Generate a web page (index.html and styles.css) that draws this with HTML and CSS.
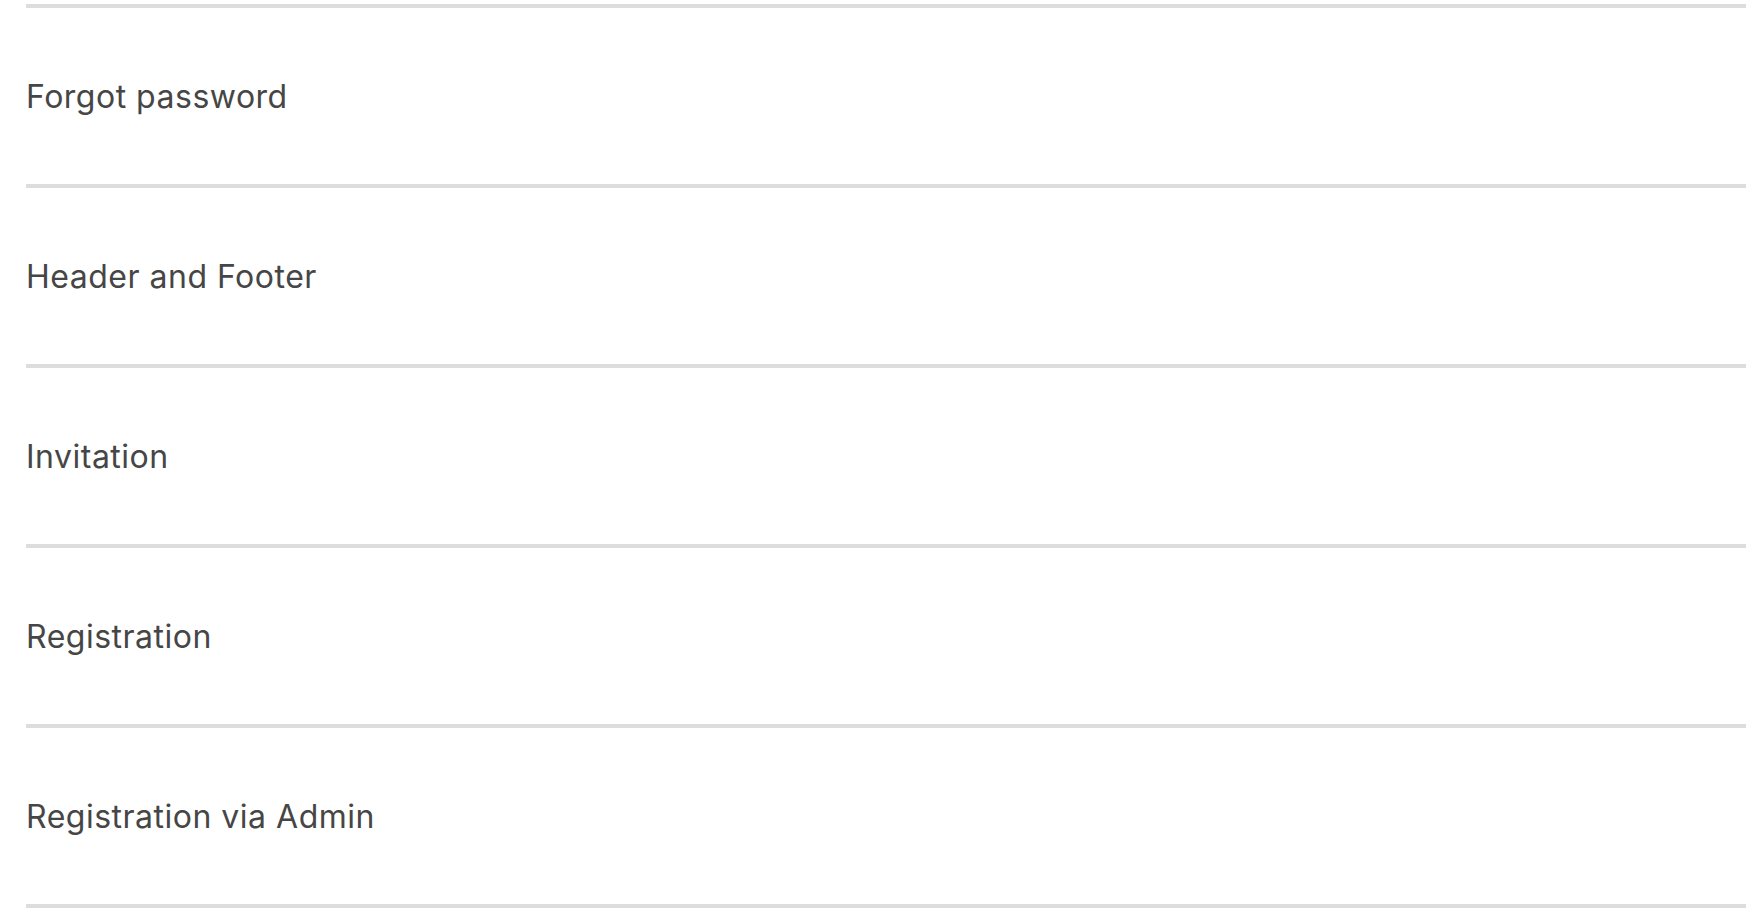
FILE: index.html
```html
<!DOCTYPE html>
<html lang="en">
<head>
<meta charset="utf-8">
<title>Templates</title>
<link rel="stylesheet" href="styles.css">
</head>
<body>
<ul class="template-list">
  <li class="template-row"><span class="template-name">Forgot password</span></li>
  <li class="template-row"><span class="template-name">Header and Footer</span></li>
  <li class="template-row"><span class="template-name">Invitation</span></li>
  <li class="template-row"><span class="template-name">Registration</span></li>
  <li class="template-row"><span class="template-name">Registration via Admin</span></li>
</ul>
</body>
</html>
```
FILE: styles.css
```css
html, body {
  margin: 0;
  padding: 0;
  background: #ffffff;
}
body {
  font-family: Inter, "Noto Sans", "Liberation Sans", sans-serif;
  color: #464646;
  padding: 4px 0 0 26px;
}
.template-list {
  list-style: none;
  margin: 0;
  padding: 0;
  border-top: 4px solid #dddddd;
}
.template-row {
  height: 176px;
  display: flex;
  align-items: center;
  border-bottom: 4px solid #dddddd;
}
.template-name {
  font-size: 32px;
  line-height: 1;
  letter-spacing: 0.5px;
  padding-top: 2px;
}
```
